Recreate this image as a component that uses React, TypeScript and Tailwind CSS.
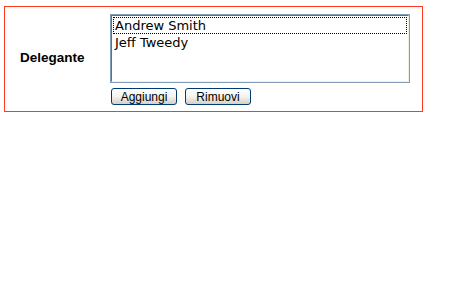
import React from 'react';

const people = ['Andrew Smith', 'Jeff Tweedy'];

const XpButton = ({ label }: { label: string }) => (
  <button
    type="button"
    className="w-[66px] h-[17px] border border-[#003c74] rounded-[3px] bg-gradient-to-b from-[#ffffff] via-[#f4f3ee] to-[#d6d0c5] text-[12px] leading-[15px] text-black pt-px"
    style={{ fontFamily: '"Liberation Sans", Arial, sans-serif' }}
  >
    {label}
  </button>
);

const App = () => {
  return (
    <div className="w-[464px] h-[308px] bg-white pt-[6px] pl-[4px]">
      <div className="w-[419px] h-[106px] border border-[#ff3a1f] flex">
        <div
          className="w-[105px] flex items-center pl-[15px] pb-[2px] text-[13.5px] font-bold text-black"
          style={{ fontFamily: '"Liberation Sans", Arial, sans-serif' }}
        >
          Delegante
        </div>
        <div className="flex flex-col pt-[7px]">
          <div className="w-[300px] h-[69px] border border-[#7f9db9]">
            <div
              className="h-full border border-t-[#716f64] border-l-[#716f64] border-b-[#f1efe2] border-r-[#f1efe2] bg-white px-px pt-px text-[13px] text-black"
              style={{ fontFamily: '"DejaVu Sans", Verdana, sans-serif' }}
            >
              {people.map((p, i) => (
                <div
                  key={p}
                  className={
                    'h-[17px] leading-[17px] pl-[2px] ' +
                    (i === 0 ? 'outline outline-1 outline-dotted outline-black -outline-offset-1' : '')
                  }
                >
                  {p}
                </div>
              ))}
            </div>
          </div>
          <div className="flex gap-[8px] mt-[5px] pl-px">
            <XpButton label="Aggiungi" />
            <XpButton label="Rimuovi" />
          </div>
        </div>
      </div>
    </div>
  );
};

export default App;
